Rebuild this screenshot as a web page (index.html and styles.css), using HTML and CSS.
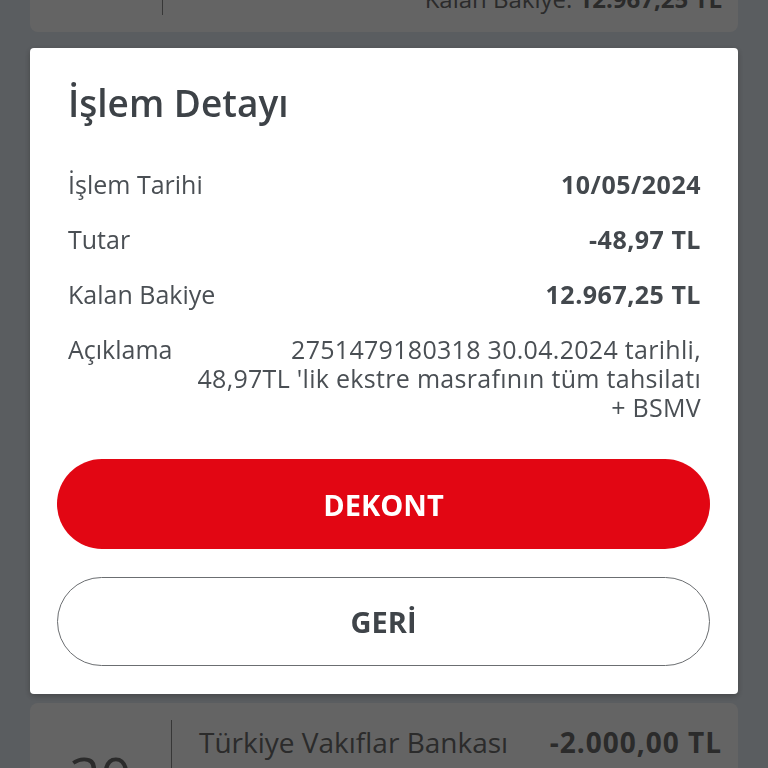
FILE: index.html
```html
<!DOCTYPE html>
<html lang="tr">
<head>
<meta charset="utf-8">
<link rel="stylesheet" href="styles.css">
</head>
<body>
<div class="screen">
  <div class="tx-list">
    <div class="tx-card">
      <div class="tx-date">29</div>
      <div class="tx-body">
        <div class="tx-top">
          <span class="tx-name">Hesap Kesim Ücreti</span>
          <span class="tx-amount">-48,97 TL</span>
        </div>
        <div class="tx-balance">Kalan Bakiye: <strong>12.967,25 TL</strong></div>
      </div>
    </div>
    <div class="tx-card tx-card-tall"></div>
    <div class="tx-card">
      <div class="tx-date tx-date-wide">30</div>
      <div class="tx-body">
        <div class="tx-top">
          <span class="tx-name">Türkiye Vakıflar Bankası</span>
          <span class="tx-amount">-2.000,00 TL</span>
        </div>
        <div class="tx-balance">Kalan Bakiye: <strong>13.016,22 TL</strong></div>
      </div>
    </div>
  </div>
</div>

<div class="overlay"></div>

<div class="modal">
  <h1 class="modal-title">İşlem Detayı</h1>
  <div class="detail-list">
    <div class="detail-row">
      <span class="detail-label">İşlem Tarihi</span>
      <span class="detail-value">10/05/2024</span>
    </div>
    <div class="detail-row">
      <span class="detail-label">Tutar</span>
      <span class="detail-value">-48,97 TL</span>
    </div>
    <div class="detail-row">
      <span class="detail-label">Kalan Bakiye</span>
      <span class="detail-value">12.967,25 TL</span>
    </div>
    <div class="detail-row">
      <span class="detail-label">Açıklama</span>
      <span class="detail-text">2751479180318 30.04.2024 tarihli,<br>48,97TL 'lik ekstre masrafının tüm tahsilatı<br>+ BSMV</span>
    </div>
  </div>
  <div class="modal-actions">
    <button class="btn btn-primary">DEKONT</button>
    <button class="btn btn-outline">GERİ</button>
  </div>
</div>
</body>
</html>
```

FILE: styles.css
```css
* {
  box-sizing: border-box;
}
html, body {
  overflow: hidden;
}
body {
  margin: 0;
  background-color: #e1e8ef;
  font-family: "Open Sans", "Liberation Sans", sans-serif;
  color: #6b6b6b;
}

/* list behind the dialog */
.screen {
  width: 768px;
  height: 768px;
  overflow: hidden;
}
.tx-list {
  display: flex;
  flex-direction: column;
  gap: 16px;
  padding: 0 30px;
  margin-top: -108px;
}
.tx-card {
  display: flex;
  height: 140px;
  background: #fafafa;
  border-radius: 8px;
}
.tx-card-tall {
  height: 639px;
}
.tx-date {
  width: 133px;
  margin: 17px 0;
  border-right: 1px solid #8a8a8a;
  display: flex;
  justify-content: center;
  font-size: 54px;
  line-height: 60px;
  padding-top: 26px;
}
.tx-date-wide {
  width: 142px;
}
.tx-body {
  flex: 1;
  display: flex;
  flex-direction: column;
  justify-content: space-between;
  padding: 23px 16px 18px 27px;
}
.tx-top {
  display: flex;
  justify-content: space-between;
  font-size: 28px;
  line-height: 32px;
}
.tx-amount {
  font-weight: 700;
  letter-spacing: 1px;
}
.tx-balance {
  text-align: right;
  font-size: 24px;
  line-height: 30px;
}
.tx-balance strong {
  font-weight: 700;
}

.overlay {
  position: fixed;
  inset: 0;
  background: rgba(0, 0, 0, 0.6);
}

/* dialog */
.modal {
  position: fixed;
  top: 48px;
  left: 30px;
  width: 708px;
  background: #ffffff;
  border-radius: 4px;
  padding: 32px 0 28px;
  box-shadow: 0 2px 6px rgba(0, 0, 0, 0.25);
}
.modal-title {
  margin: 0 38px;
  font-size: 37px;
  line-height: 46px;
  font-weight: 600;
  color: #3d4247;
}
.detail-list {
  display: flex;
  flex-direction: column;
  gap: 26px;
  margin: 44px 37px 0 38px;
  font-size: 25px;
  line-height: 29px;
  color: #4a4f54;
}
.detail-row {
  display: flex;
  justify-content: space-between;
  gap: 20px;
}
.detail-label {
  flex-shrink: 0;
}
.detail-value {
  font-weight: 700;
  letter-spacing: 0.5px;
  color: #43484d;
}
.detail-text {
  text-align: right;
  letter-spacing: 0.3px;
}
.modal-actions {
  display: flex;
  flex-direction: column;
  gap: 28px;
  margin-top: 37px;
  padding: 0 28px 0 27px;
}
.btn {
  height: 90px;
  border-radius: 45px;
  font-family: inherit;
  font-size: 29px;
  font-weight: 700;
  cursor: pointer;
}
.btn-primary {
  background: #e20613;
  color: #ffffff;
  border: none;
}
.btn-outline {
  height: 89px;
  background: #ffffff;
  color: #3f4449;
  border: 1.5px solid #6b6e71;
}
```
